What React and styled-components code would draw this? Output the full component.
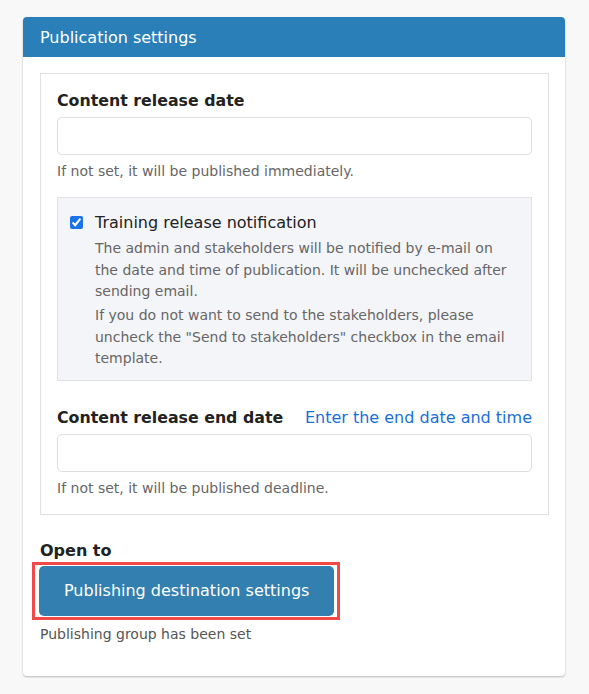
import React from 'react';
import styled, { createGlobalStyle } from 'styled-components';

const GlobalStyle = createGlobalStyle`
  body {
    margin: 0;
    background: #f8f8f8;
    font-family: "DejaVu Sans", Verdana, sans-serif;
  }
`;

const Page = styled.div`
  padding: 17px 24px 18px 23px;
`;

const Card = styled.section`
  background: #fff;
  border-radius: 4px;
  box-shadow: 0 1px 2px rgba(0, 0, 0, 0.25);
  padding-bottom: 34px;
`;

const CardHeader = styled.h3`
  margin: 0;
  height: 40px;
  display: flex;
  align-items: center;
  padding: 0 17px;
  background: #2a7fb8;
  color: #fff;
  font-size: 16px;
  font-weight: normal;
  border-radius: 4px 4px 0 0;
`;

const CardBody = styled.div`
  padding: 16px 16px 0 17px;
`;

const Box = styled.div`
  border: 1px solid #e0e0e0;
  padding: 16px;
  display: flex;
  flex-direction: column;
`;

const LabelRow = styled.div`
  display: flex;
  justify-content: space-between;
  align-items: baseline;
  margin: ${p => p.$top || 0}px 0 7px;
`;

const Label = styled.label`
  font-size: 15.8px;
  font-weight: bold;
  color: #222;
`;

const Link = styled.a`
  color: #1a6fd8;
  font-size: 16px;
  text-decoration: none;
`;

const Input = styled.input`
  box-sizing: border-box;
  width: 100%;
  height: 38px;
  border: 1px solid #dedede;
  border-radius: 5px;
  margin: 0;
`;

const Help = styled.p`
  margin: 6px 0 0;
  font-size: 14px;
  color: #666;
  line-height: 20px;
`;

const Notice = styled.div`
  margin-top: 16px;
  background: #f4f5f9;
  border: 1px solid #e2e2e6;
  padding: 14px 12px 10px 12px;
  display: grid;
  grid-template-columns: 25px 420px;
`;

const Check = styled.input`
  margin: 4px 0 0 0;
  width: 13px;
  height: 13px;
  accent-color: #1a73e8;
`;

const NoticeTitle = styled.label`
  font-size: 16px;
  color: #222;
  line-height: 22px;
`;

const NoticeText = styled.p`
  grid-column: 2;
  margin: ${p => p.$gap}px 0 0;
  font-size: 14px;
  line-height: 21.5px;
  color: #666;
`;

const Section = styled.div`
  margin-top: 26px;
`;

const SectionTitle = styled.div`
  font-size: 16px;
  font-weight: bold;
  color: #222;
  margin-bottom: 2px;
`;

const Highlight = styled.div`
  display: inline-block;
  margin-left: -8px;
  border: 3px solid #f24848;
  padding: 1px 3px 1px 4px;
`;

const Button = styled.button`
  height: 50px;
  padding: 0 25px;
  background: #337fb0;
  color: #fff;
  border: none;
  border-radius: 5px;
  font-family: inherit;
  font-size: 16px;
  display: block;
`;

const Note = styled.p`
  margin: 6px 0 0;
  font-size: 14px;
  color: #555;
`;

export default function App() {
  return (
    <>
      <GlobalStyle />
      <Page>
        <Card>
          <CardHeader>Publication settings</CardHeader>
          <CardBody>
            <Box>
              <LabelRow $top={1}>
                <Label>Content release date</Label>
              </LabelRow>
              <Input />
              <Help>If not set, it will be published immediately.</Help>
              <Notice>
                <Check type="checkbox" defaultChecked />
                <NoticeTitle>Training release notification</NoticeTitle>
                <NoticeText $gap={4}>
                  The admin and stakeholders will be notified by e-mail on the date and time of publication. It will be unchecked after sending email.
                </NoticeText>
                <NoticeText $gap={2.5}>
                  If you do not want to send to the stakeholders, please uncheck the "Send to stakeholders" checkbox in the email template.
                </NoticeText>
              </Notice>
              <LabelRow $top={27}>
                <Label>Content release end date</Label>
                <Link href="#">Enter the end date and time</Link>
              </LabelRow>
              <Input />
              <Help>If not set, it will be published deadline.</Help>
            </Box>
            <Section>
              <SectionTitle>Open to</SectionTitle>
              <Highlight>
                <Button>Publishing destination settings</Button>
              </Highlight>
              <Note>Publishing group has been set</Note>
            </Section>
          </CardBody>
        </Card>
      </Page>
    </>
  );
}
